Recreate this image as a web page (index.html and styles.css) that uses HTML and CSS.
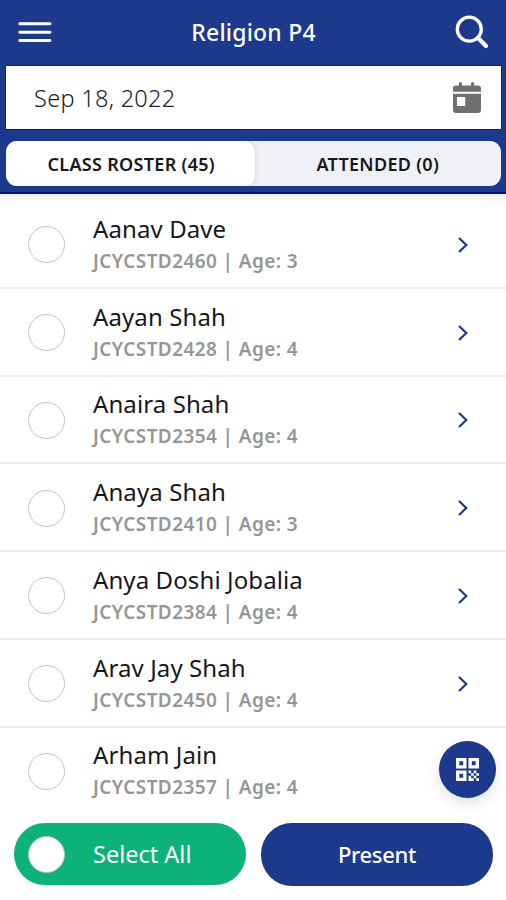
FILE: index.html
```html
<!DOCTYPE html>
<html lang="en">
<head>
<meta charset="utf-8">
<title>Religion P4</title>
<link rel="stylesheet" href="styles.css">
</head>
<body>
<main class="app">
  <header class="header">
    <div class="topbar">
      <button class="icon-btn" aria-label="Menu"><svg width="34" height="22" viewBox="0 0 34 22"><path d="M1.8 2.7H32M1.8 11.2H32M1.8 19.5H32" stroke="#fff" stroke-width="2.9" stroke-linecap="round"/></svg></button>
      <h1 class="title">Religion P4</h1>
      <button class="icon-btn" aria-label="Search"><svg width="34" height="34" viewBox="0 0 34 34" fill="none" stroke="#fff"><circle cx="14.3" cy="14.2" r="12" stroke-width="3.3"/><path d="M22.8 22.8L31 31" stroke-width="4.2" stroke-linecap="round"/></svg></button>
    </div>
    <div class="date-field">
      <span class="date-text">Sep 18, 2022</span>
      <svg width="28" height="32" viewBox="0 0 28 32" fill="#707070"><path d="M0 9.7V6.5Q0 3.5 3 3.5H5.8V1.6Q5.8.2 7.4.2T9 1.6V3.5H18V1.6Q18 .2 19.6.2T21.2 1.6V3.5H25Q28 3.5 28 6.5V9.7Z"/><path fill-rule="evenodd" d="M0 11.8H28V28Q28 31 25 31H3Q0 31 0 28ZM4 15V24H12.2V15Z"/></svg>
    </div>
    <div class="tabs">
      <div class="tab tab-active"><span class="tab-text">CLASS ROSTER (45)</span></div>
      <div class="tab"><span class="tab-text">ATTENDED (0)</span></div>
    </div>
  </header>
  <ul class="roster">
    <li class="row"><i class="radio"></i><div class="info"><div class="name">Aanav Dave</div><div class="meta">JCYCSTD2460 | Age: 3</div></div><svg class="chevron" viewBox="0 0 12 18"><path d="M2 2L9.3 9L2 16"/></svg></li>
    <li class="row"><i class="radio"></i><div class="info"><div class="name">Aayan Shah</div><div class="meta">JCYCSTD2428 | Age: 4</div></div><svg class="chevron" viewBox="0 0 12 18"><path d="M2 2L9.3 9L2 16"/></svg></li>
    <li class="row"><i class="radio"></i><div class="info"><div class="name">Anaira Shah</div><div class="meta">JCYCSTD2354 | Age: 4</div></div><svg class="chevron" viewBox="0 0 12 18"><path d="M2 2L9.3 9L2 16"/></svg></li>
    <li class="row"><i class="radio"></i><div class="info"><div class="name">Anaya Shah</div><div class="meta">JCYCSTD2410 | Age: 3</div></div><svg class="chevron" viewBox="0 0 12 18"><path d="M2 2L9.3 9L2 16"/></svg></li>
    <li class="row"><i class="radio"></i><div class="info"><div class="name">Anya Doshi Jobalia</div><div class="meta">JCYCSTD2384 | Age: 4</div></div><svg class="chevron" viewBox="0 0 12 18"><path d="M2 2L9.3 9L2 16"/></svg></li>
    <li class="row"><i class="radio"></i><div class="info"><div class="name">Arav Jay Shah</div><div class="meta">JCYCSTD2450 | Age: 4</div></div><svg class="chevron" viewBox="0 0 12 18"><path d="M2 2L9.3 9L2 16"/></svg></li>
    <li class="row"><i class="radio"></i><div class="info"><div class="name">Arham Jain</div><div class="meta">JCYCSTD2357 | Age: 4</div></div></li>
  </ul>
  <button class="fab" aria-label="Scan code"><svg width="23" height="23" viewBox="0 0 24 24" fill="#fff"><path fill-rule="evenodd" d="M0 0H11V11H0ZM3.5 3.5V7.5H7.5V3.5ZM13 0H24V11H13ZM16.5 3.5V7.5H20.5V3.5ZM0 13H11V24H0ZM3.5 16.5V20.5H7.5V16.5Z"/><path d="M13 13H15.8V15.8H13ZM18.5 13H21.2V15.8H18.5ZM15.8 15.8H18.5V18.5H15.8ZM21.2 15.8H24V18.5H21.2ZM13 18.5H15.8V24H13ZM18.5 18.5H21.2V21.2H18.5ZM15.8 21.2H18.5V24H15.8ZM21.2 21.2H24V24H21.2Z"/></svg></button>
  <footer class="actions">
    <button class="btn btn-select"><i class="radio radio-filled"></i><span>Select All</span></button>
    <button class="btn btn-present"><span>Present</span></button>
  </footer>
</main>
</body>
</html>
```
FILE: styles.css
```css
* { box-sizing: border-box; }
body { margin: 0; background: #fff; font-family: "Noto Sans", "Open Sans", sans-serif; }
button { border: 0; padding: 0; background: none; font: inherit; color: inherit; }
svg { display: block; flex: none; }
.app { position: relative; width: 506px; height: 900px; overflow: hidden; display: flex; flex-direction: column; }
.header { flex: none; height: 194px; padding: 0 5px 0 6px; background: #1c398c; border-bottom: 2px solid #071379; }
.topbar { height: 66px; padding: 0 12px 2px 12px; display: flex; align-items: center; justify-content: space-between; color: #fff; }
.title { margin: 0; font-size: 23px; font-weight: 500; line-height: 32px; letter-spacing: .2px; }
.date-field { height: 63px; padding: 0 20px 0 28px; background: #fff; display: flex; align-items: center; justify-content: space-between; box-shadow: 0 0 0 1px #101c80; }
.date-text { font-size: 23.5px; font-weight: 350; color: #222; letter-spacing: .3px; }
.tabs { height: 45px; margin-top: 12px; display: flex; background: #f0f1f7; border-radius: 11px; overflow: hidden; }
.tab { flex: 1; display: flex; align-items: center; justify-content: center; font-size: 18px; font-weight: 600; color: #17171a; letter-spacing: .3px; }
.tab-active { padding-left: 2px; background: #fff; border-radius: 11px; box-shadow: 1px 0 4px #d5d6de; }
.roster { flex: none; margin: 0; padding: 7px 0 0; list-style: none; background: linear-gradient(#eeeeef, #fbfbfb 7px, #fff 8px); }
.row { height: 87.75px; padding: 2px 37px 0 28px; display: flex; align-items: center; border-bottom: 2px solid #eee; }
.row:last-child { border-bottom-color: transparent; }
.radio { flex: none; width: 37px; height: 37px; border: 1.5px solid #c4c4c4; border-radius: 50%; background: #fff; }
.info { flex: 1; margin: 2px 0 0 28px; }
.name { font-size: 24px; line-height: 30px; letter-spacing: .1px; color: #17181c; white-space: nowrap; }
.meta { font-size: 19px; line-height: 34px; font-weight: 600; letter-spacing: .4px; color: #969696; white-space: nowrap; }
.chevron { width: 12px; height: 18px; fill: none; stroke: #1d3790; stroke-width: 2.2; }
.fab { position: absolute; left: 439px; top: 741px; width: 57px; height: 57px; border-radius: 50%; background: #1c398c; display: flex; align-items: center; justify-content: center; box-shadow: 0 5px 14px rgba(0,0,0,.12); }
.actions { position: absolute; left: 0; right: 0; bottom: 0; height: 77px; padding: 0 13px 0 14px; display: grid; grid-template-columns: 232px 232px; justify-content: space-between; }
.btn { height: 62px; border-radius: 31px; color: #fff; font-size: 23.5px; display: flex; align-items: center; }
.btn-select { background: #0cb277; padding-left: 14px; gap: 28px; }
.btn-present { height: 63px; padding-bottom: 2px; background: #1c398c; justify-content: center; font-size: 22px; font-weight: 500; letter-spacing: -.35px; }
.radio-filled { border-color: #b5c4bd; }
```
